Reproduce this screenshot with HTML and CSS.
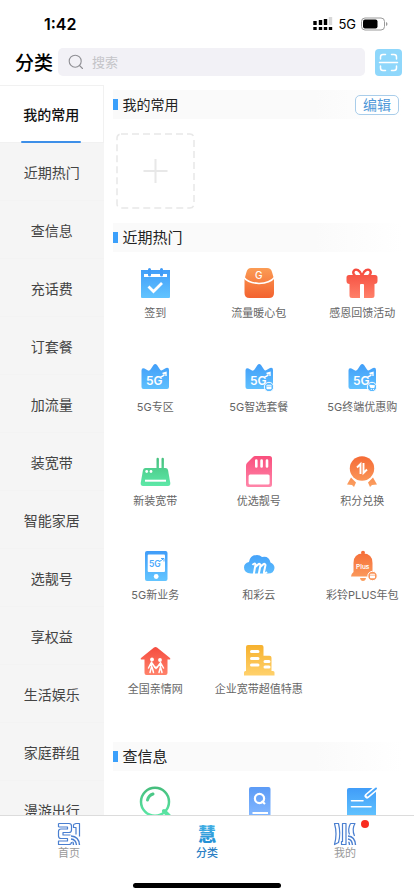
FILE: index.html
```html
<!DOCTYPE html>
<html lang="zh-CN">
<head>
    <meta charset="UTF-8">
    <meta name="viewport" content="width=device-width, initial-scale=1.0">
    <title>分类</title>
    <link rel="stylesheet" href="styles.css">
</head>
<body>
    <!-- shared gradients and symbols -->
    <svg class="defs" width="0" height="0">
        <defs>
            <linearGradient id="blue" gradientUnits="userSpaceOnUse" x1="0" y1="3" x2="0" y2="33"><stop offset="0" stop-color="#3f9bf8"/><stop offset="1" stop-color="#62c4ff"/></linearGradient>
            <linearGradient id="orange" gradientUnits="userSpaceOnUse" x1="0" y1="3" x2="0" y2="33"><stop offset="0" stop-color="#f56a35"/><stop offset="1" stop-color="#fb9e5f"/></linearGradient>
            <linearGradient id="bag" gradientUnits="userSpaceOnUse" x1="0" y1="3" x2="0" y2="33"><stop offset="0" stop-color="#fb9c55"/><stop offset="1" stop-color="#f3622f"/></linearGradient>
            <linearGradient id="red" gradientUnits="userSpaceOnUse" x1="0" y1="3" x2="0" y2="33"><stop offset="0" stop-color="#f4463a"/><stop offset="1" stop-color="#ff8069"/></linearGradient>
            <linearGradient id="green" gradientUnits="userSpaceOnUse" x1="0" y1="3" x2="0" y2="33"><stop offset="0" stop-color="#45bd7c"/><stop offset="1" stop-color="#5de9a8"/></linearGradient>
            <linearGradient id="pink" gradientUnits="userSpaceOnUse" x1="0" y1="3" x2="0" y2="33"><stop offset="0" stop-color="#f94f7d"/><stop offset="1" stop-color="#ff84a8"/></linearGradient>
            <linearGradient id="yellow" gradientUnits="userSpaceOnUse" x1="0" y1="3" x2="0" y2="33"><stop offset="0" stop-color="#f6b02c"/><stop offset="1" stop-color="#ffd069"/></linearGradient>
            <linearGradient id="indigo" gradientUnits="userSpaceOnUse" x1="0" y1="3" x2="0" y2="33"><stop offset="0" stop-color="#5c9bf6"/><stop offset="1" stop-color="#84b8ff"/></linearGradient>
            <linearGradient id="hui" x1="0" y1="0" x2="0" y2="1"><stop offset="0" stop-color="#4cb8e8"/><stop offset="1" stop-color="#1e8ad2"/></linearGradient>
            <symbol id="crown" viewBox="0 0 36 36">
                <path fill="url(#blue)" d="M4.500 28V11.500Q4.500 8.500 7.500 9.500L11 11.500Q12.500 12 13.500 10.500L16.500 6Q18.200 4 20 6L23 10.500Q24 12 25.500 11L29 9Q32 8 32 11V28Q32 30 30 30H6.500Q4.500 30 4.500 28Z"/>
                <text class="mark" x="9" y="26" font-size="12">5G</text>
                <path d="M23.500 18Q26 17.500 27.500 15.500M25.500 14.500L29 13.500L29 17" fill="none" stroke="#fff" stroke-width="1.400"/>
            </symbol>
        </defs>
    </svg>

    <div class="app">
        <div class="status-bar">
            <span class="time">1:42</span>
            <div class="status-right">
                <svg width="20" height="14" viewBox="0 0 20 14">
                    <path d="M2 4V8M7.500 3V8M12.500 2V8" stroke="#000" stroke-width="3.400"/>
                    <path d="M17.500 0V8" stroke="#d8d8d8" stroke-width="3.400"/>
                    <path d="M2 10V13M7.500 10V13M12.500 10V13M17.500 10V13" stroke="#000" stroke-width="3.400"/>
                </svg>
                <span class="network">5G</span>
                <svg width="27" height="14" viewBox="0 0 27 14">
                    <rect x=".500" y="1" width="23" height="12" rx="3.500" fill="none" stroke="#9a9a9a"/>
                    <rect x="2" y="2.500" width="14.500" height="9" rx="2" fill="#000"/>
                    <path d="M25 5V9Q26.500 8.500 26.500 7T25 5Z" fill="#9a9a9a"/>
                </svg>
            </div>
        </div>

        <header class="header">
            <h1 class="page-title">分类</h1>
            <label class="search">
                <svg width="16" height="16" viewBox="0 0 16 16" fill="none" stroke="#8f8f94" stroke-width="1.100" stroke-linecap="round">
                    <circle cx="7.200" cy="7.200" r="6"/>
                    <path d="M11.500 11.500L14.500 14.500"/>
                </svg>
                <input class="search-input" type="search" placeholder="搜索">
            </label>
            <button class="scan" type="button">
                <svg width="27" height="27" viewBox="0 0 27 27" fill="none" stroke="#fff" stroke-width="1.500" stroke-linecap="round">
                    <path d="M5.500 10V8Q5.500 5.500 8 5.500H10.500M16.500 5.500H19Q21.500 5.500 21.500 8V10M5.500 17V19Q5.500 21.500 8 21.500H10.500M16.500 21.500H19Q21.500 21.500 21.500 19V17M4.500 13.500H22.500"/>
                </svg>
            </button>
        </header>

        <main class="main">
            <nav class="sidebar">
                <a class="side-item active" href="#mine">我的常用</a>
                <a class="side-item" href="#hot">近期热门</a>
                <a class="side-item" href="#query">查信息</a>
                <a class="side-item" href="#">充话费</a>
                <a class="side-item" href="#">订套餐</a>
                <a class="side-item" href="#">加流量</a>
                <a class="side-item" href="#">装宽带</a>
                <a class="side-item" href="#">智能家居</a>
                <a class="side-item" href="#">选靓号</a>
                <a class="side-item" href="#">享权益</a>
                <a class="side-item" href="#">生活娱乐</a>
                <a class="side-item" href="#">家庭群组</a>
                <a class="side-item" href="#">漫游出行</a>
            </nav>

            <div class="content">
                <section id="mine">
                    <div class="section-head">
                        <h2 class="section-title small">我的常用</h2>
                        <button class="edit" type="button">编辑</button>
                    </div>
                    <button class="add" type="button">
                        <svg width="79" height="76" viewBox="0 0 79 76" fill="none" stroke="#e8e8e8">
                            <rect x="1" y="1" width="77" height="74" rx="4" stroke-width="1.500" stroke-dasharray="7 4"/>
                            <path d="M27.500 38H51.500M39.500 26V50" stroke-width="2"/>
                        </svg>
                    </button>
                </section>

                <section id="hot">
                    <div class="section-head">
                        <h2 class="section-title">近期热门</h2>
                    </div>
                    <div class="grid">
                        <a class="item" href="#">
                            <svg class="icon" viewBox="0 0 36 36">
                                <path fill="url(#blue)" d="M4 5H33V32Q33 33 32 33H5Q4 33 4 32Z"/>
                                <path d="M7 10.500H30" stroke="#fff" stroke-width="3"/>
                                <path d="M12.500 4.500V10M24.500 4.500V10" stroke="#3f9bf8" stroke-width="3" stroke-linecap="round"/>
                                <path d="M11.500 21.500L16.500 26.500L25 18" fill="none" stroke="#fff" stroke-width="2.800"/>
                            </svg>
                            <span class="label">签到</span>
                        </a>
                        <a class="item" href="#">
                            <svg class="icon" viewBox="0 0 36 36">
                                <path fill="url(#bag)" d="M10 3H26Q30 3 31 7L33 14V28Q33 33 28 33H8.500Q3.500 33 3.500 28V14L5.500 7Q6.500 3 10 3Z"/>
                                <path d="M3 12.500Q7 18 18 18.500Q29 18 33.500 12.500" fill="none" stroke="#fff" stroke-width="1.700"/>
                                <text class="mark plain" x="14" y="13.500" font-size="10">G</text>
                            </svg>
                            <span class="label">流量暖心包</span>
                        </a>
                        <a class="item" href="#">
                            <svg class="icon" viewBox="0 0 36 36">
                                <path d="M17.500 10C16 5 12 3.500 10 5.500Q8 8 11 10.500M18.500 10C20 5 24 3.500 26 5.500Q28 8 25 10.500" fill="none" stroke="url(#red)" stroke-width="2.300"/>
                                <path fill="url(#red)" d="M5 10H31Q33.500 10 33.500 12.500V16Q33.500 19 30.500 19V30.500Q30.500 33 28 33H20V20Q20 19 19 19H17Q16 19 16 20V33H8Q5.500 33 5.500 30.500V19Q2.500 19 2.500 16V12.500Q2.500 10 5 10Z"/>
                            </svg>
                            <span class="label">感恩回馈活动</span>
                        </a>

                        <a class="item" href="#">
                            <svg class="icon" viewBox="0 0 36 36"><use href="#crown"/></svg>
                            <span class="label">5G专区</span>
                        </a>
                        <a class="item" href="#">
                            <svg class="icon" viewBox="0 0 36 36">
                                <use href="#crown"/>
                                <circle cx="28" cy="28" r="4.700" fill="#59b9ff" stroke="#fff" stroke-width="1"/>
                                <rect x="25.500" y="25.700" width="5" height="4.600" rx=".800" fill="#fff"/>
                                <path d="M25.500 27.200H30.500" stroke="#59b9ff" stroke-width=".700"/>
                            </svg>
                            <span class="label">5G智选套餐</span>
                        </a>
                        <a class="item" href="#">
                            <svg class="icon" viewBox="0 0 36 36">
                                <use href="#crown"/>
                                <circle cx="28" cy="28" r="4.700" fill="#59b9ff" stroke="#fff" stroke-width="1"/>
                                <path d="M25 25.700H26L31 26.200L30.300 29H26.500Z" fill="#fff"/>
                                <circle cx="27.300" cy="30.300" r=".600" fill="#fff"/>
                                <circle cx="29.500" cy="30.300" r=".600" fill="#fff"/>
                            </svg>
                            <span class="label">5G终端优惠购</span>
                        </a>

                        <a class="item" href="#">
                            <svg class="icon" viewBox="0 0 36 36">
                                <path d="M20.700 6V16M25.700 6V16" stroke="url(#green)" stroke-width="2.400" stroke-linecap="round"/>
                                <path fill="url(#green)" d="M8.500 15H28.500Q30.500 15 31 17L33.300 30Q33.500 33 31 33H6Q3.500 33 3.700 30L6 17Q6.500 15 8.500 15Z"/>
                                <circle cx="9.700" cy="18.500" r="1.400" fill="#fff"/>
                                <circle cx="14" cy="18.500" r="1.400" fill="#fff"/>
                                <path d="M8 27.700H29" stroke="#fff" stroke-width="2"/>
                            </svg>
                            <span class="label">新装宽带</span>
                        </a>
                        <a class="item" href="#">
                            <svg class="icon" viewBox="0 0 36 36">
                                <path fill="url(#pink)" d="M14 3H28.500Q31 3 31 5.500V31.500Q31 34 28.500 34H7.500Q5 34 5 31.500V12.500Q5 11 6 10L12 4Q13 3 14 3Z"/>
                                <path d="M15.300 7.500V13.500M20.600 7.500V13.500M26 7.500V13.500" stroke="#fff" stroke-width="2.600" stroke-linecap="round"/>
                                <rect x="7.600" y="21.500" width="21" height="10" rx="1.500" fill="#fff"/>
                            </svg>
                            <span class="label">优选靓号</span>
                        </a>
                        <a class="item" href="#">
                            <svg class="icon" viewBox="0 0 36 36">
                                <circle cx="18" cy="15.500" r="12.200" fill="url(#orange)"/>
                                <path fill="url(#orange)" d="M7 24.500L12 29.500L10 34L8 32L3 31.500ZM29 24.500L24 29.500L26 34L28 32L33 31.500Z"/>
                                <path d="M13 14.500L16.500 11V21M23 16.500L19.500 20V10" fill="none" stroke="#fff" stroke-width="1.900"/>
                            </svg>
                            <span class="label">积分兑换</span>
                        </a>

                        <a class="item" href="#">
                            <svg class="icon" viewBox="0 0 36 36">
                                <rect x="8" y="4" width="22.500" height="30" rx="2" fill="url(#blue)"/>
                                <rect x="10.700" y="7.500" width="17.300" height="17.500" rx="1" fill="#fff"/>
                                <text class="mark blue" x="12" y="20" font-size="8.500">5G</text>
                                <path d="M23 14Q25 13.500 26 12M24 11.500H27V14.500" fill="none" stroke="#48a7fb"/>
                                <circle cx="19.200" cy="29.500" r="2.400" fill="#fff"/>
                            </svg>
                            <span class="label">5G新业务</span>
                        </a>
                        <a class="item" href="#">
                            <svg class="icon" viewBox="0 0 36 36">
                                <path fill="url(#blue)" d="M10 26.500Q3 26 3 20.500Q3 16 8 15Q9 8 16 8Q19 8 21 10Q28 8.500 29.500 15.500Q33.500 17 33.500 21Q33 26.500 27 26.500Z"/>
                                <path d="M11.500 18Q13.500 15.500 14.500 17.500L12.500 29M14.500 20Q18.500 15 19.500 18L17.500 28.500M19.500 20Q23.500 15 24.500 18L23 25Q22.500 28 26 25" fill="none" stroke="#fff" stroke-width="2"/>
                            </svg>
                            <span class="label">和彩云</span>
                        </a>
                        <a class="item" href="#">
                            <svg class="icon" viewBox="0 0 36 36">
                                <circle cx="19" cy="5.800" r="2" fill="url(#orange)"/>
                                <path fill="url(#orange)" d="M9.500 16Q9.500 6.500 19 6.500T28.500 16V25Q30.500 27.500 30 29.500H7Q7 27 9.500 25ZM16 31H22Q21.500 34 19 34T16 31Z"/>
                                <text class="mark upright" x="12" y="21.500" font-size="6.500">Plus</text>
                                <circle cx="28.500" cy="29" r="4.700" fill="#fa955a" stroke="#fff" stroke-width="1"/>
                                <rect x="26" y="26.700" width="5" height="4.600" rx=".800" fill="#fff"/>
                                <path d="M26 28.200H31" stroke="#fa955a" stroke-width=".700"/>
                            </svg>
                            <span class="label">彩铃PLUS年包</span>
                        </a>

                        <a class="item" href="#">
                            <svg class="icon" viewBox="0 0 36 36">
                                <path fill="url(#red)" d="M17 6.500Q18.500 5.500 20 6.500L33 17Q34 18.500 32 18.500H30.500V32Q30.500 34 28.500 34H9.500Q7.500 34 7.500 32V18.500H5Q3 18.500 4 17Z"/>
                                <circle cx="15" cy="18.500" r="1.900" fill="#fff"/>
                                <circle cx="23" cy="19" r="1.900" fill="#fff"/>
                                <path d="M14.500 21V26L13 31.500M15 26L16.500 31.500M14 22L11.500 27M15 22L18 26.500M23.500 21.500V26L22 31.500M23.500 26L25 31.500M24 22.500L26.500 27M23 22.500L20 26.500" fill="none" stroke="#fff" stroke-width="1.500" stroke-linecap="round"/>
                                <path d="M19 28.500L17 26.200Q17.500 24.500 19 25.800Q20.500 24.500 21 26.200Z" fill="#fff"/>
                            </svg>
                            <span class="label">全国亲情网</span>
                        </a>
                        <a class="item" href="#">
                            <svg class="icon" viewBox="0 0 36 36">
                                <path fill="url(#yellow)" d="M7 4H20.500Q22.500 4 22.500 6V14.700H28.500Q30.500 14.700 30.500 16.700V30H32Q33.500 30 33.500 31.500V34.500H3V31.500Q3 30 4.500 30H5V6Q5 4 7 4Z"/>
                                <path d="M10.500 10.500H17M10.500 17.500H17M10.500 24H17M24 20.500H28M24 26H28" stroke="#fff" stroke-width="3" stroke-linecap="round"/>
                            </svg>
                            <span class="label">企业宽带超值特惠</span>
                        </a>
                    </div>
                </section>

                <section id="query">
                    <div class="section-head">
                        <h2 class="section-title">查信息</h2>
                    </div>
                    <div class="grid">
                        <a class="item" href="#">
                            <svg class="icon" viewBox="0 0 36 36" fill="none" stroke="url(#green)">
                                <circle cx="18" cy="17.700" r="14" stroke-width="2.500"/>
                                <path d="M10.500 16Q11.500 11.500 16 10" stroke-width="3" stroke-linecap="round"/>
                                <path d="M27 27L32 32" stroke-width="4" stroke-linecap="round"/>
                            </svg>
                        </a>
                        <a class="item" href="#">
                            <svg class="icon" viewBox="0 0 36 36">
                                <rect x="8" y="3" width="21.500" height="32" rx="2" fill="url(#indigo)"/>
                                <circle cx="18.500" cy="14.500" r="4.600" fill="none" stroke="#fff" stroke-width="2.200"/>
                                <path d="M20.500 17L24 20M11.500 29H27" stroke="#fff" stroke-width="2.200"/>
                            </svg>
                        </a>
                        <a class="item" href="#">
                            <svg class="icon" viewBox="0 0 36 36">
                                <rect x="3" y="4" width="29" height="31" rx="2" fill="url(#blue)"/>
                                <path d="M7.500 16.700H19M7.500 22.700H27" stroke="#fff" stroke-width="1.600" stroke-linecap="round"/>
                                <path d="M23 12L33 3.500" stroke="#fff" stroke-width="5" stroke-linecap="round"/>
                                <path d="M23.500 11.500L32 4.500" stroke="#48a5fa" stroke-width="2" stroke-linecap="round"/>
                            </svg>
                        </a>
                    </div>
                </section>
            </div>
        </main>

        <nav class="tab-bar">
            <a class="tab" href="#">
                <svg class="tab-icon" viewBox="0 0 24 24" fill="none" stroke="#4a7fd0" stroke-width="1.200" stroke-linejoin="round">
                    <path d="M1.500 1.500H12Q14.500 1.500 14.500 4V8Q14.500 10.500 12 10.500H6V13H13.500M1.500 5H10.500V7H4Q1.500 7 1.500 9.500V14Q1.500 16.500 4 16.500H10.500V19H1.500V22.500H12Q14.500 22.500 14.500 20M1.500 1.500V5"/>
                    <path d="M16.500 2.500L19 1.500H22.500V14.500M16.500 2.500V5.500H19V12.500"/>
                    <path d="M14 14Q22 14.500 22.500 23M14 17Q19 17.500 19.500 23M15.500 20Q16.500 20.500 16.500 23" stroke-width="1.400"/>
                </svg>
                <span class="tab-label">首页</span>
            </a>
            <a class="tab current" href="#">
                <svg class="tab-icon" viewBox="0 0 24 24">
                    <text class="hui" x="3" y="19" font-size="18">慧</text>
                </svg>
                <span class="tab-label">分类</span>
            </a>
            <a class="tab" href="#">
                <svg class="tab-icon" viewBox="0 0 24 24" fill="none" stroke="#4a7fd0" stroke-width="1.200" stroke-linejoin="round">
                    <path d="M1.500 1.500H5.500Q8 12 5.500 20.500L1.500 22.500Q4.500 12 1.500 1.500Z"/>
                    <path d="M9.500 1.500H13V22.500H8.500V19.500H9.500Z"/>
                    <path d="M17.500 1.500H22Q18.500 7 21.500 14M17.500 1.500Q14.500 7 16.500 12.500"/>
                    <path d="M15 14Q22 14.500 22.500 23M15 17Q19 17.500 19.500 23M15.500 20Q16.500 20.500 16.500 23" stroke-width="1.400"/>
                </svg>
                <span class="tab-label">我的</span>
                <span class="dot"></span>
            </a>
        </nav>
        <div class="home-indicator"></div>
    </div>
</body>
</html>
```
FILE: styles.css
```css
* {
    box-sizing: border-box;
}
body {
    margin: 0;
    font-family: Inter, "Noto Sans CJK SC", sans-serif;
    background-color: #fff;
    color: #222;
}
a {
    color: inherit;
    text-decoration: none;
}
button {
    padding: 0;
    border: 0;
    background: none;
    font-family: inherit;
    cursor: pointer;
}
svg {
    display: block;
    flex: none;
}
.defs {
    position: absolute;
}
.app {
    display: flex;
    flex-direction: column;
    height: 100vh;
}

/* status bar */
.status-bar {
    display: flex;
    justify-content: space-between;
    align-items: center;
    height: 48px;
    padding: 0 26px 0 44px;
    color: #000;
}
.time {
    font-size: 16px;
    font-weight: 600;
}
.status-right {
    display: flex;
    align-items: center;
    gap: 5px;
}
.network {
    font-size: 13px;
    font-weight: 400;
}

/* title and search */
.header {
    display: flex;
    align-items: center;
    padding: 0 12px 9px 15px;
}
.page-title {
    margin: 0 5px 0 0;
    padding-top: 3px;
    font-size: 19px;
    line-height: 25px;
    font-weight: 500;
    color: #000;
}
.search {
    display: flex;
    flex: 1;
    align-items: center;
    gap: 8px;
    height: 28px;
    padding: 0 10px;
    border-radius: 5px;
    background-color: #f2f1f6;
}
.search-input {
    flex: 1;
    min-width: 0;
    padding: 0;
    border: 0;
    outline: 0;
    background: none;
    font-family: inherit;
    font-size: 13px;
}
.search-input::placeholder {
    color: #c4c4c8;
}
.scan {
    margin-left: 10px;
    border-radius: 4px;
    background-color: #8fd7fb;
}

/* category list */
.main {
    display: flex;
    flex: 1;
    min-height: 0;
    overflow: hidden;
}
.sidebar {
    flex: 0 0 25%;
    background-color: #f5f5f5;
}
.side-item {
    display: flex;
    justify-content: center;
    align-items: center;
    height: 58px;
    border-bottom: 1px solid #f3f3f3;
    font-size: 14px;
    color: #444;
}
.side-item.active {
    position: relative;
    border: 1px solid #f1f1f1;
    border-left: 0;
    background-color: #fff;
    font-weight: 500;
    color: #111;
}
.side-item.active::after {
    content: "";
    position: absolute;
    bottom: -1px;
    width: 60px;
    height: 2px;
    border-radius: 1px;
    background-color: #3d8fe8;
}

/* sections */
.content {
    flex: 1;
    padding-top: 5px;
}
.section-head {
    display: flex;
    justify-content: space-between;
    align-items: center;
    height: 29px;
    margin: 0 12px 0 9px;
    padding-right: 3px;
    background: linear-gradient(to right, #fafafa 70%, #fff);
}
.section-title {
    display: flex;
    align-items: center;
    gap: 5px;
    margin: 0;
    font-size: 15px;
    line-height: 20px;
    font-weight: 400;
}
.section-title.small {
    font-size: 14px;
}
.section-title::before {
    content: "";
    width: 5px;
    height: 11px;
    background-color: #3ba0fb;
}
.edit {
    width: 44px;
    height: 20px;
    border: 1px solid #a9cdea;
    border-radius: 5px;
    background-color: #fff;
    font-size: 14px;
    line-height: 18px;
    color: #4f97d8;
}
.add {
    display: block;
    margin: 14px 12px;
}
.grid {
    display: grid;
    grid-template-columns: repeat(3, 1fr);
    row-gap: 38px;
    padding: 13px 0 45px;
}
.item {
    display: flex;
    flex-direction: column;
    align-items: center;
    gap: 4px;
}
.icon {
    width: 36px;
    height: 36px;
}
.label {
    font-size: 11px;
    line-height: 16px;
    white-space: nowrap;
    color: #666;
}
.mark {
    font-family: Inter, sans-serif;
    font-weight: 600;
    fill: #fff;
}
.mark.plain {
    font-weight: 500;
}
.mark.blue {
    fill: #48a7fb;
}

/* bottom tabs */
.tab-bar {
    display: flex;
    height: 56px;
    border-top: 1px solid #dcdcdc;
    background-color: #fff;
}
.tab {
    position: relative;
    display: flex;
    flex: 1;
    flex-direction: column;
    align-items: center;
    padding-top: 6px;
    color: #999;
}
.tab-icon {
    width: 24px;
    height: 24px;
}
.tab-label {
    font-size: 11px;
    line-height: 14px;
}
.tab.current {
    font-weight: 500;
    color: #2b7fc4;
}
.hui {
    font-family: "Noto Sans CJK SC", sans-serif;
    font-weight: 900;
    fill: url(#hui);
}
.dot {
    position: absolute;
    top: 4px;
    left: calc(50% + 16px);
    width: 8px;
    height: 8px;
    border-radius: 50%;
    background-color: #f92c20;
}
.home-indicator {
    width: 148px;
    height: 5px;
    margin: 12px auto 8px;
    border-radius: 3px;
    background-color: #000;
}
```
